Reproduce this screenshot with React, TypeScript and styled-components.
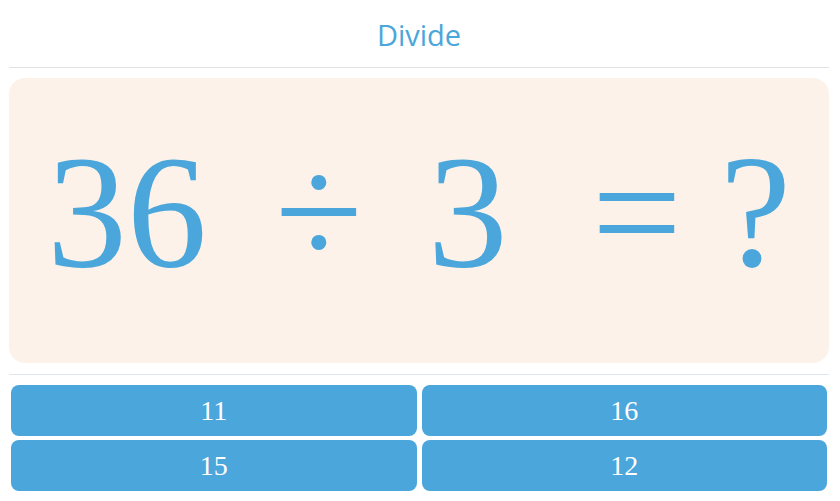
import styled, { createGlobalStyle } from "styled-components";

const GlobalStyle = createGlobalStyle`
  body {
    margin: 0;
    background: #ffffff;
    font-family: "Liberation Serif", "Times New Roman", serif;
  }
`;

const BLUE = "#4aa6db";

interface Term {
  text: string;
  gap: number;
}

const terms: Term[] = [
  { text: "36", gap: 0 },
  { text: "÷", gap: 68 },
  { text: "3", gap: 65 },
  { text: "=", gap: 84 },
  { text: "?", gap: 38 },
];

const answers = [11, 16, 15, 12];

const Page = styled.div`
  width: 820px;
  margin-left: 9px;
  display: flex;
  flex-direction: column;
`;

const Header = styled.div`
  height: 68px;
  box-sizing: border-box;
  padding-top: 15px;
  border-bottom: 1px solid #e2e2e2;
  display: flex;
  justify-content: center;
`;

const Title = styled.h1`
  margin: 0;
  font-family: "Open Sans", "Noto Sans", sans-serif;
  font-weight: 400;
  font-size: 29px;
  color: ${BLUE};
`;

const Card = styled.div`
  margin-top: 10px;
  height: 285px;
  box-sizing: border-box;
  padding-bottom: 17px;
  background: #fcf2e9;
  border-radius: 16px;
  display: flex;
  align-items: center;
  justify-content: center;
`;

const Equation = styled.div`
  display: flex;
  font-family: "Liberation Serif", "Times New Roman", serif;
  font-size: 160px;
  color: ${BLUE};
  white-space: nowrap;
`;

const EquationTerm = styled.span<{ $gap: number }>`
  margin-left: ${(p) => p.$gap}px;
`;

const Divider = styled.div`
  margin-top: 11px;
  height: 1px;
  background: #dfe6ec;
`;

const Answers = styled.div`
  margin: 10px 2px 0;
  display: grid;
  grid-template-columns: 1fr 1fr;
  gap: 4px 5px;
`;

const AnswerButton = styled.button`
  height: 51px;
  border: none;
  border-radius: 8px;
  background: ${BLUE};
  color: #ffffff;
  font-family: "Liberation Serif", "Times New Roman", serif;
  font-size: 28px;
  cursor: pointer;
`;

const App = () => {
  return (
    <>
      <GlobalStyle />
      <Page>
        <Header>
          <Title>Divide</Title>
        </Header>
        <Card>
          <Equation>
            {terms.map((t, i) => (
              <EquationTerm key={i} $gap={t.gap}>
                {t.text}
              </EquationTerm>
            ))}
          </Equation>
        </Card>
        <Divider />
        <Answers>
          {answers.map((a) => (
            <AnswerButton key={a}>{a}</AnswerButton>
          ))}
        </Answers>
      </Page>
    </>
  );
};

export default App;
